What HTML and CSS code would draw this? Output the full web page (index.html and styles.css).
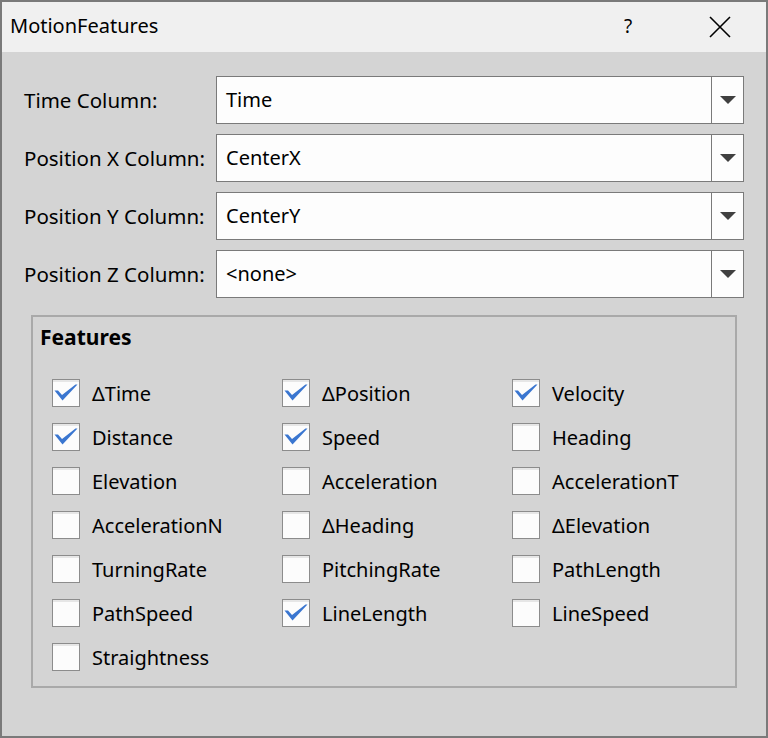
FILE: index.html
```html
<!DOCTYPE html>
<html>
<head>
<meta charset="utf-8">
<link rel="stylesheet" href="styles.css">
</head>
<body>
<div class="window">
  <div class="titlebar">
    <div class="title">MotionFeatures</div>
    <div class="help">?</div>
    <div class="close">
      <svg width="22" height="22" viewBox="0 0 22 22"><path d="M1 1 L21 21 M21 1 L1 21" stroke="#000" stroke-width="1.6" fill="none"/></svg>
    </div>
  </div>
  <div class="content">
    <div class="form">
      <div class="row"><div class="label">Time Column:</div><div class="combo"><div class="value">Time</div><div class="drop"><span class="arrow"></span></div></div></div>
      <div class="row"><div class="label">Position X Column:</div><div class="combo"><div class="value">CenterX</div><div class="drop"><span class="arrow"></span></div></div></div>
      <div class="row"><div class="label">Position Y Column:</div><div class="combo"><div class="value">CenterY</div><div class="drop"><span class="arrow"></span></div></div></div>
      <div class="row"><div class="label">Position Z Column:</div><div class="combo"><div class="value">&lt;none&gt;</div><div class="drop"><span class="arrow"></span></div></div></div>
    </div>
    <div class="group">
      <div class="group-title">Features</div>
      <div class="grid">
        <div class="item"><span class="box checked"></span><span class="text">ΔTime</span></div>
        <div class="item"><span class="box checked"></span><span class="text">ΔPosition</span></div>
        <div class="item"><span class="box checked"></span><span class="text">Velocity</span></div>
        <div class="item"><span class="box checked"></span><span class="text">Distance</span></div>
        <div class="item"><span class="box checked"></span><span class="text">Speed</span></div>
        <div class="item"><span class="box"></span><span class="text">Heading</span></div>
        <div class="item"><span class="box"></span><span class="text">Elevation</span></div>
        <div class="item"><span class="box"></span><span class="text">Acceleration</span></div>
        <div class="item"><span class="box"></span><span class="text">AccelerationT</span></div>
        <div class="item"><span class="box"></span><span class="text">AccelerationN</span></div>
        <div class="item"><span class="box"></span><span class="text">ΔHeading</span></div>
        <div class="item"><span class="box"></span><span class="text">ΔElevation</span></div>
        <div class="item"><span class="box"></span><span class="text">TurningRate</span></div>
        <div class="item"><span class="box"></span><span class="text">PitchingRate</span></div>
        <div class="item"><span class="box"></span><span class="text">PathLength</span></div>
        <div class="item"><span class="box"></span><span class="text">PathSpeed</span></div>
        <div class="item"><span class="box checked"></span><span class="text">LineLength</span></div>
        <div class="item"><span class="box"></span><span class="text">LineSpeed</span></div>
        <div class="item"><span class="box"></span><span class="text">Straightness</span></div>
      </div>
    </div>
  </div>
</div>
</body>
</html>
```
FILE: styles.css
```css
* { box-sizing: border-box; }
html, body { margin: 0; padding: 0; }
body {
  width: 768px;
  height: 738px;
  font-family: "Noto Sans", "Open Sans", sans-serif;
  font-size: 20px;
  color: #000;
  background: #d4d4d4;
}
.window {
  width: 768px;
  height: 738px;
  border: 2px solid #7a7a7a;
  background: #d4d4d4;
  display: flex;
  flex-direction: column;
}
.titlebar {
  height: 50px;
  background: #f0f0f0;
  display: flex;
  align-items: center;
  flex: none;
}
.title {
  padding-left: 8px;
  flex: 1;
  font-size: 20px;
  padding-bottom: 4px;
}
.help {
  width: 30px;
  text-align: center;
  font-size: 19px;
  margin-right: 66px;
  padding-bottom: 2px;
}
.close {
  width: 22px;
  height: 22px;
  margin-right: 35px;
  display: flex;
}
.content {
  flex: 1;
  padding: 24px 22px 0 22px;
}
.form {
  display: flex;
  flex-direction: column;
  gap: 10px;
}
.row {
  display: flex;
  align-items: center;
  height: 48px;
}
.label {
  width: 192px;
  flex: none;
  font-size: 20.5px;
}
.combo {
  flex: 1;
  height: 48px;
  border: 1px solid #7a7a7a;
  background: #fdfdfd;
  display: flex;
}
.value {
  flex: 1;
  padding-left: 9px;
  padding-bottom: 1px;
  display: flex;
  align-items: center;
}
.drop {
  width: 32px;
  border-left: 1px solid #7a7a7a;
  display: flex;
  align-items: center;
  justify-content: center;
}
.arrow {
  width: 0;
  height: 0;
  border-left: 8px solid transparent;
  border-right: 8px solid transparent;
  border-top: 8px solid #404040;
  margin-left: 1px;
}
.group {
  margin: 17px 7px 0 7px;
  border: 2px solid #a9a9a9;
  padding: 0 0 7px 7px;
}
.group-title {
  font-weight: bold;
  font-size: 21px;
  height: 54px;
  padding-top: 6px;
}
.grid {
  margin-left: 12px;
  display: grid;
  grid-template-columns: repeat(3, 230px);
  grid-auto-rows: 44px;
}
.item {
  display: flex;
  align-items: center;
}
.box {
  width: 28px;
  height: 28px;
  border: 1px solid #8c8c8c;
  background: #fcfcfc;
  box-shadow: inset 0 2px 0 #e6e6e6;
  flex: none;
  margin-right: 12px;
  position: relative;
}
.box.checked::after {
  content: "";
  position: absolute;
  left: 0;
  top: 0;
  width: 26px;
  height: 26px;
  background: url("data:image/svg+xml;utf8,<svg xmlns='http://www.w3.org/2000/svg' width='26' height='26' viewBox='0 0 26 26'><path d='M1.5 10.5 L5 10.5 L9 15 L22.5 4.5 L24.5 4.5 L9.5 20.5 Z' fill='%233a76d0'/></svg>") no-repeat;
}
```
